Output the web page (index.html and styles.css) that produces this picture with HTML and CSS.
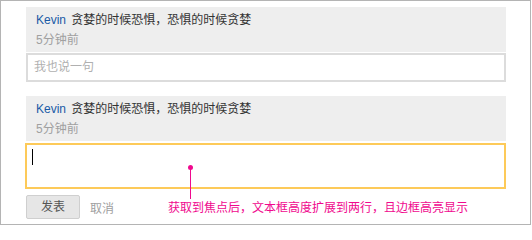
FILE: index.html
```html
<!DOCTYPE html>
<html>
<head>
<meta charset="utf-8">
<link rel="stylesheet" href="styles.css">
</head>
<body>
<div class="frame">
  <div class="comment">
    <div class="line"><span class="name">Kevin</span> 贪婪的时候恐惧，恐惧的时候贪婪</div>
    <div class="time">5分钟前</div>
  </div>
  <div class="input">我也说一句</div>

  <div class="comment second">
    <div class="line"><span class="name">Kevin</span> 贪婪的时候恐惧，恐惧的时候贪婪</div>
    <div class="time">5分钟前</div>
  </div>
  <div class="input-focus"><span class="caret"></span></div>
  <div class="actions">
    <span class="btn">发表</span>
    <span class="cancel">取消</span>
  </div>

  <div class="note">
    <span class="dot"></span>
    <span class="stem"></span>
    <span class="note-text">获取到焦点后，文本框高度扩展到两行，且边框高亮显示</span>
  </div>
</div>
</body>
</html>
```

FILE: styles.css
```css
* { box-sizing: border-box; }
html, body { margin: 0; padding: 0; background: #fff; }
body {
  font-family: "Liberation Sans", "Noto Sans CJK SC", sans-serif;
  font-size: 12px;
  color: #333;
}
.frame {
  position: relative;
  width: 531px;
  height: 225px;
  border: 1px solid #b4b4b4;
  padding: 6px 24px 0 25px;
}
.comment {
  background: #eee;
  padding: 3px 10px 2px;
  height: 45px;
}
.comment.second { margin-top: 14px; }
.line, .time { line-height: 20px; height: 20px; white-space: nowrap; }
.name { color: #1a5aa6; margin-right: 2px; }
.time { color: #a0a0a0; }
.input {
  margin-top: 1px;
  height: 29px;
  border: 2px solid #dcdcdc;
  padding: 0 6px;
  line-height: 25px;
  color: #b0b0b0;
}
.input-focus {
  margin-top: 2px;
  margin-left: -1px;
  height: 46px;
  border: 2px solid #fdca59;
  padding: 4px 5px;
}
.caret {
  display: block;
  width: 1px;
  height: 16px;
  background: #000;
}
.actions {
  display: flex;
  align-items: center;
  margin-top: 6px;
}
.btn {
  width: 54px;
  height: 24px;
  border: 1px solid #cfcfcf;
  border-radius: 2px;
  background: #e6e6e6;
  color: #555;
  line-height: 22px;
  text-align: center;
}
.cancel {
  margin-left: 10px;
  color: #a0a0a0;
}
.note {
  position: absolute;
  left: 166px;
  top: 163px;
  width: 320px;
  height: 55px;
}
.dot {
  position: absolute;
  left: 21px;
  top: 1px;
  width: 5px;
  height: 5px;
  border-radius: 50%;
  background: #f0098e;
}
.stem {
  position: absolute;
  left: 23px;
  top: 3px;
  width: 1px;
  height: 32px;
  background: #f0098e;
}
.note-text {
  position: absolute;
  left: 1px;
  top: 34px;
  line-height: 20px;
  white-space: nowrap;
  color: #f0098e;
}
```
